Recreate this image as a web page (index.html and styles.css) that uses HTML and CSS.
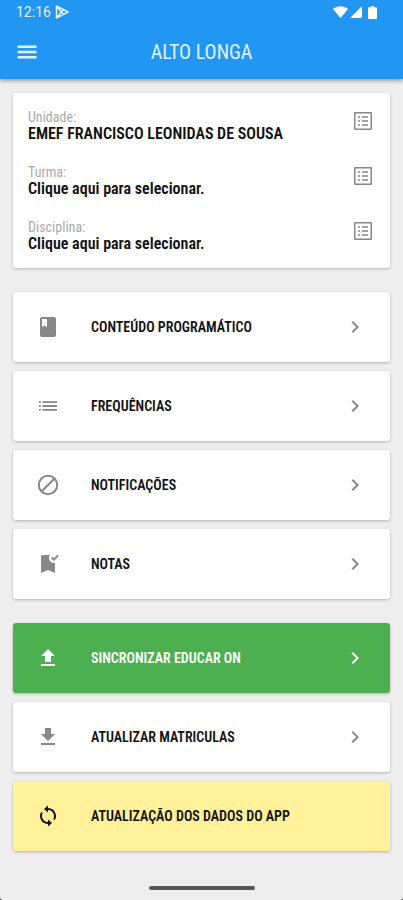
FILE: index.html
```html
<!DOCTYPE html>
<html lang="pt-BR">
<head>
  <meta charset="UTF-8" />
  <meta name="viewport" content="width=device-width, initial-scale=1.0" />
  <title>Alto Longa</title>
  <link rel="stylesheet" href="styles.css">
</head>
<body>
  <!-- Ícones reutilizados -->
  <svg class="sprite" aria-hidden="true">
    <symbol id="icon-list" viewBox="0 0 24 24"><path d="M19.500 4.500v15h-15v-15h15m.6-1.500H3.900c-.5 0-.9.4-.9.900v16.200c0 .4.4.9.900.9h16.200c.4 0 .9-.5.9-.9V3.900c0-.5-.5-.9-.9-.9zM11 7.200h6v1.600h-6zM11 11.200h6v1.600h-6zM11 15.200h6v1.600h-6zM7 7.200h2v1.600H7zM7 11.200h2v1.600H7zM7 15.200h2v1.600H7z" /></symbol>
    <symbol id="icon-chevron" viewBox="0 0 24 24"><path d="M10 6 8.590 7.410 13.170 12l-4.580 4.590L10 18l6-6z" /></symbol>
  </svg>

  <div class="app">
    <header class="topo">
      <div class="status">
        <span class="hora">12:16</span>
        <svg class="play" viewBox="0 0 14 14"><path d="M1.500 1 13 7 1.500 13zM1.500 1 8.500 9.500M1.500 13 8.500 4.500" /></svg>
        <div class="sinais">
          <svg width="15" height="12" viewBox="0 0 15 12"><path d="M7.500 12 0 3C4-.8 11-.8 15 3z" /></svg>
          <svg width="12" height="12" viewBox="0 0 12 12"><path d="M12 0v12H0z" /></svg>
          <svg class="bateria" width="9" height="13" viewBox="0 0 9 13"><path d="M3 0h3v1.300h2c.6 0 1 .4 1 1V12c0 .6-.4 1-1 1H1c-.6 0-1-.4-1-1V2.300c0-.6.4-1 1-1h2z" /></svg>
        </div>
      </div>
      <div class="barra">
        <button class="menu-btn" aria-label="Menu">
          <svg viewBox="0 0 24 24"><path d="M2.500 18.500h19V16h-19zM2.500 13.250h19v-2.500h-19zM2.500 5.500V8h19V5.500z" /></svg>
        </button>
        <h1>ALTO LONGA</h1>
      </div>
    </header>

    <main>
      <section class="card selecao">
        <button class="campo">
          <span class="texto"><span class="rotulo">Unidade:</span><span class="valor">EMEF FRANCISCO LEONIDAS DE SOUSA</span></span>
          <svg class="icone"><use href="#icon-list" /></svg>
        </button>
        <button class="campo">
          <span class="texto"><span class="rotulo">Turma:</span><span class="valor">Clique aqui para selecionar.</span></span>
          <svg class="icone"><use href="#icon-list" /></svg>
        </button>
        <button class="campo">
          <span class="texto"><span class="rotulo">Disciplina:</span><span class="valor">Clique aqui para selecionar.</span></span>
          <svg class="icone"><use href="#icon-list" /></svg>
        </button>
      </section>

      <nav class="grupo">
        <a class="card item" href="#conteudo">
          <svg class="icone" viewBox="0 0 24 24"><path d="M18 2H6c-1.100 0-2 .9-2 2v16c0 1.100.9 2 2 2h12c1.100 0 2-.9 2-2V4c0-1.100-.9-2-2-2zM6 4h5v8l-2.500-1.500L6 12V4z" /></svg>
          <span>CONTEÚDO PROGRAMÁTICO</span>
          <svg class="seta"><use href="#icon-chevron" /></svg>
        </a>
        <a class="card item" href="#frequencias">
          <svg class="icone" viewBox="0 0 24 24"><path d="M3 9h1.800V7.200H3zM3 12.900h1.800v-1.800H3zM3 16.800h1.800V15H3zM6.500 9H21V7.200H6.500zM6.500 12.900H21v-1.800H6.500zM6.500 16.800H21V15H6.500z" /></svg>
          <span>FREQUÊNCIAS</span>
          <svg class="seta"><use href="#icon-chevron" /></svg>
        </a>
        <a class="card item" href="#notificacoes">
          <svg class="icone" viewBox="0 0 24 24"><path class="traco" d="M12 2.800a9.200 9.200 0 1 0 0 18.400 9.200 9.200 0 0 0 0-18.400zM18.500 5.500l-13 13" /></svg>
          <span>NOTIFICAÇÕES</span>
          <svg class="seta"><use href="#icon-chevron" /></svg>
        </a>
        <a class="card item" href="#notas">
          <svg class="icone" viewBox="0 0 24 24"><path d="M19 21l-7-3-7 3V5c0-1.100.9-2 2-2h7a5 5 0 0 0 5 7.900zM17.830 9 15 6.170l1.410-1.410 1.410 1.410 3.540-3.540 1.410 1.410z" /></svg>
          <span>NOTAS</span>
          <svg class="seta"><use href="#icon-chevron" /></svg>
        </a>
      </nav>

      <div class="grupo">
        <button class="card item verde">
          <svg class="icone" viewBox="0 0 24 24"><path d="M5 20h14v-2H5zM5 10h4v6h6v-6h4l-7-7z" /></svg>
          <span>SINCRONIZAR EDUCAR ON</span>
          <svg class="seta"><use href="#icon-chevron" /></svg>
        </button>
        <button class="card item">
          <svg class="icone" viewBox="0 0 24 24"><path d="M19 9h-4V3H9v6H5l7 7zM5 18v2h14v-2z" /></svg>
          <span>ATUALIZAR MATRICULAS</span>
          <svg class="seta"><use href="#icon-chevron" /></svg>
        </button>
        <button class="card item amarelo">
          <svg class="icone" viewBox="0 0 24 24"><path d="M12 4V1.500L8 5l4 3.500V6c3.310 0 6 2.690 6 6 0 1.010-.25 1.970-.7 2.800l1.460 1.460C19.540 15.030 20 13.570 20 12c0-4.420-3.580-8-8-8zm0 14c-3.310 0-6-2.690-6-6 0-1.010.25-1.970.7-2.800L5.240 7.740C4.460 8.970 4 10.430 4 12c0 4.420 3.580 8 8 8v2.500l4-3.500-4-3.500z" /></svg>
          <span>ATUALIZAÇÃO DOS DADOS DO APP</span>
        </button>
      </div>
    </main>

    <div class="gesto"></div>
  </div>
</body>
</html>
```
FILE: styles.css
```css
* {
  margin: 0;
  padding: 0;
  box-sizing: border-box;
}

body {
  background: #444;
  font-family: "Roboto Condensed", "Liberation Sans Narrow", Roboto, sans-serif;
  color: #111;
}

button {
  border: none;
  background: none;
  font: inherit;
  color: inherit;
  text-align: left;
  cursor: pointer;
}

svg {
  display: block;
  fill: currentColor;
}

.sprite {
  display: none;
}

.app {
  display: flex;
  flex-direction: column;
  min-height: 100vh;
  background: #eee;
  border-radius: 0 0 3px 3px;
}

/* Topo */
.topo {
  background: #2196f3;
  color: #e1f1fd;
  box-shadow: 0 2px 4px rgba(0, 0, 0, 0.35);
}

.status {
  display: flex;
  align-items: center;
  height: 24px;
  padding: 0 26px 0 16px;
}

.hora {
  font-family: Roboto, sans-serif;
  font-size: 14px;
}

.play {
  width: 14px;
  height: 14px;
  margin-left: 4px;
  fill: none;
  stroke: currentColor;
  stroke-width: 1.5;
  stroke-linejoin: round;
}

.sinais {
  display: flex;
  align-items: center;
  gap: 2px;
  margin-left: auto;
  color: #fff;
}

.bateria {
  margin-left: 4px;
}

.barra {
  display: grid;
  grid-template-columns: 24px 1fr 24px;
  align-items: center;
  height: 55px;
  padding: 0 15px;
}

.menu-btn svg {
  width: 24px;
  height: 24px;
}

.barra h1 {
  font-size: 20px;
  font-weight: 400;
  text-align: center;
}

/* Cartões */
main {
  display: flex;
  flex-direction: column;
  gap: 24px;
  padding: 14px 13px;
}

.card {
  background: #fff;
  border-radius: 3px;
  box-shadow: 0 1px 3px rgba(0, 0, 0, 0.25);
}

.selecao {
  display: flex;
  flex-direction: column;
  gap: 21px;
  padding: 16px 15px 15px;
}

.campo {
  display: flex;
  justify-content: space-between;
  align-items: flex-start;
}

.texto {
  display: flex;
  flex-direction: column;
}

.rotulo {
  font-size: 14px;
  line-height: 16px;
  color: #aaa;
}

.valor {
  font-size: 16px;
  line-height: 18px;
  font-weight: 600;
}

.icone {
  width: 24px;
  height: 24px;
  color: #888;
}

.grupo {
  display: flex;
  flex-direction: column;
  gap: 9px;
}

.item {
  display: grid;
  grid-template-columns: 55px 1fr 24px;
  align-items: center;
  height: 70px;
  padding: 0 23px;
  font-size: 14px;
  font-weight: 600;
  color: #111;
  text-decoration: none;
}

.traco {
  fill: none;
  stroke: currentColor;
  stroke-width: 2;
}

.seta {
  width: 24px;
  height: 24px;
  color: #888;
}

.verde {
  background: #4caf50;
  color: #fff;
}

.verde .icone,
.verde .seta {
  color: #fff;
}

.amarelo {
  background: #fff29b;
}

.amarelo .icone {
  color: #111;
}

/* Barra de gestos */
.gesto {
  width: 106px;
  height: 4px;
  margin: auto auto 10px;
  border-radius: 2px;
  background: #555;
}
```
